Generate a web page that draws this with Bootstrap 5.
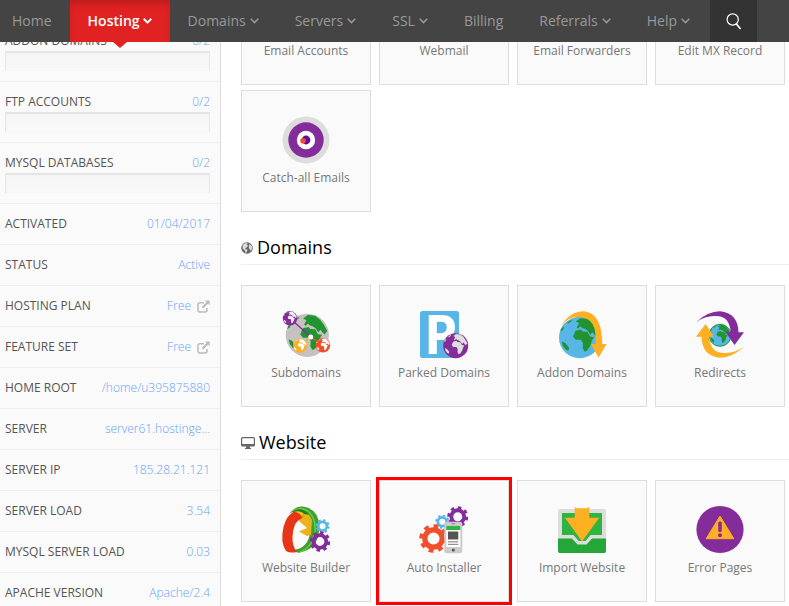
<!DOCTYPE html>
<html lang="en">
<head>
<meta charset="utf-8">
<meta name="viewport" content="width=device-width, initial-scale=1">
<title>Hosting</title>
<link href="https://cdn.jsdelivr.net/npm/bootstrap@5.3.0/dist/css/bootstrap.min.css" rel="stylesheet">
<style>
body{font-family:"Open Sans","Noto Sans",sans-serif;font-size:12px;line-height:20px;color:#555;background:#fff}
a{text-decoration:none}
.topbar{background:#444;height:42px;font-size:14px}
.topbar .nav-link{height:42px;padding:0 18px;color:#999;gap:4px}
.topbar .nav-link.home-link{padding-left:12px}
.topbar .nav-link.active{background:#e02222;color:#fff;font-weight:600;gap:3px;box-shadow:inset 0 6px 8px -4px #b01a1a}
.topbar .nav-link.active::after{content:"";position:absolute;top:100%;left:50%;margin-left:-7px;border:7px solid transparent;border-top:6px solid #e02222;border-bottom:0}
.chev{width:9px;height:6px;fill:none;stroke:currentColor;stroke-width:1.5}
.active .chev{stroke-width:2}
.search-btn{width:47px;height:42px;margin-left:2px;background:#333;color:#fff;border:0}
.scrolled{margin-top:-37px}
.side{width:221px;padding-top:58px;background:#fafafa;border-right:1px solid #ddd}
.side li{padding:10px 10px 10px 5px;border-bottom:1px solid #eee}
.side li a,.side li .val{color:#6ba2f5;font-weight:300}
.side svg{color:#bbb;width:13px;height:13px;margin-left:6px}
.meter{height:20px;background:linear-gradient(#f5f5f5,#f9f9f9);box-shadow:inset 1px 2px 1px #e4e4e4,inset -1px 0 1px #e8e8e8}
.pane{padding-left:20px}
.tiles{display:grid;grid-template-columns:repeat(4,minmax(0,1fr));gap:5px 8px;padding-right:4px}
.tile{height:122px;padding-top:25px;background:#fafafa;border:1px solid #ddd;color:#777;gap:4px}
.tile svg,.tile .blank{width:48px;height:48px;overflow:visible;flex:none}
.picked::after{content:"";position:absolute;inset:-4px;border:3px solid #f00}
.section-title{height:53px;margin:0 0 20px;padding-top:20px;font-size:18px;color:#000;font-weight:400;border-bottom:1px solid #eee;gap:4px}
</style>
<script src="https://cdn.jsdelivr.net/npm/bootstrap@5.3.0/dist/js/bootstrap.bundle.min.js"></script>
</head>
<body>
<svg width="0" height="0" class="d-none" aria-hidden="true">
  <symbol id="land" viewBox="-62 -62 124 124">
    <path d="M-13-20 4-24 9-18 23-17 31-3 43-1 36 10 34 20 23 39 15 43 9 32 10 17 4 7-12 7-20-3zM-9-31-2-43-12-48 2-58 23-56 38-44 48-30 58-12 50-2 44-8 38-16 32-8 24-20 16-26 8-28 2-34-4-27zM-38-44-22-55-26-47-36-42zM-54-28-46-34-50-22-58-18zM-54 12-44 16-32 30-34 40-42 36-50 26z"/>
  </symbol>
  <symbol id="gear" viewBox="-10 -10 20 20">
    <g fill="none" stroke="currentColor"><circle r="6" stroke-width="3.6"/><circle r="8.3" stroke-width="3" pathLength="16" stroke-dasharray="1 1"/></g>
  </symbol>
  <symbol id="chevron" viewBox="0 0 9 6"><path d="M.7.8 4.5 4.6 8.3.8"/></symbol>
  <symbol id="external" viewBox="0 0 13 13">
    <path d="M7 2.8H3Q1 2.8 1 4.8V10Q1 12 3 12H8Q10 12 10 10V8" fill="none" stroke="currentColor" stroke-width="1.5"/>
    <path d="M8 .5H12.7V5.2L11.1 3.6 6.3 8.4 4.8 6.9 9.6 2.1z" fill="currentColor"/>
  </symbol>
</svg>

<nav class="topbar navbar fixed-top p-0 flex-nowrap justify-content-start" aria-label="Main">
  <div class="nav flex-nowrap">
    <a class="nav-link home-link d-flex align-items-center" href="#">Home</a>
    <a class="nav-link active position-relative d-flex align-items-center" href="#">Hosting<svg class="chev"><use href="#chevron"/></svg></a>
    <a class="nav-link d-flex align-items-center" href="#">Domains<svg class="chev"><use href="#chevron"/></svg></a>
    <a class="nav-link d-flex align-items-center" href="#">Servers<svg class="chev"><use href="#chevron"/></svg></a>
    <a class="nav-link d-flex align-items-center" href="#">SSL<svg class="chev"><use href="#chevron"/></svg></a>
    <a class="nav-link d-flex align-items-center" href="#">Billing</a>
    <a class="nav-link d-flex align-items-center" href="#">Referrals<svg class="chev"><use href="#chevron"/></svg></a>
    <a class="nav-link d-flex align-items-center" href="#">Help<svg class="chev"><use href="#chevron"/></svg></a>
  </div>
  <button class="search-btn p-0 d-flex align-items-center justify-content-center" type="button" aria-label="Search">
    <svg width="16" height="17" viewBox="0 0 16 17" fill="none" stroke="currentColor" stroke-width="1.2"><circle cx="6.7" cy="6.5" r="5.6"/><path d="M10.2 10.8 14.6 16" stroke-width="1.7"/></svg>
  </button>
</nav>

<div class="vh-100 overflow-hidden">
<div class="scrolled d-flex">
  <aside class="side flex-shrink-0">
    <ul class="list-unstyled m-0">
      <li><div class="d-flex justify-content-between"><span>ADDON DOMAINS</span><a href="#">0/2</a></div><div class="meter"></div></li>
      <li><div class="d-flex justify-content-between"><span>FTP ACCOUNTS</span><a href="#">0/2</a></div><div class="meter"></div></li>
      <li><div class="d-flex justify-content-between"><span>MYSQL DATABASES</span><a href="#">0/2</a></div><div class="meter"></div></li>
      <li class="d-flex justify-content-between"><span>ACTIVATED</span><span class="val">01/04/2017</span></li>
      <li class="d-flex justify-content-between"><span>STATUS</span><span class="val">Active</span></li>
      <li class="d-flex justify-content-between"><span>HOSTING PLAN</span><a class="d-flex align-items-center" href="#">Free<svg><use href="#external"/></svg></a></li>
      <li class="d-flex justify-content-between"><span>FEATURE SET</span><a class="d-flex align-items-center" href="#">Free<svg><use href="#external"/></svg></a></li>
      <li class="d-flex justify-content-between"><span>HOME ROOT</span><span class="val">/home/u395875880</span></li>
      <li class="d-flex justify-content-between"><span>SERVER</span><span class="val">server61.hostinge...</span></li>
      <li class="d-flex justify-content-between"><span>SERVER IP</span><span class="val">185.28.21.121</span></li>
      <li class="d-flex justify-content-between"><span>SERVER LOAD</span><span class="val">3.54</span></li>
      <li class="d-flex justify-content-between"><span>MYSQL SERVER LOAD</span><span class="val">0.03</span></li>
      <li class="d-flex justify-content-between"><span>APACHE VERSION</span><span class="val">Apache/2.4</span></li>
    </ul>
  </aside>

  <main class="pane flex-grow-1">
    <div class="tiles">
      <a class="tile d-flex flex-column align-items-center" href="#"><span class="blank"></span>Email Accounts</a>
      <a class="tile d-flex flex-column align-items-center" href="#"><span class="blank"></span>Webmail</a>
      <a class="tile d-flex flex-column align-items-center" href="#"><span class="blank"></span>Email Forwarders</a>
      <a class="tile d-flex flex-column align-items-center" href="#"><span class="blank"></span>Edit MX Record</a>
      <a class="tile d-flex flex-column align-items-center" href="#">
        <svg viewBox="0 0 48 48"><circle cx="24" cy="24" r="23.5" fill="#ddd"/><circle cx="24" cy="24" r="17.7" fill="#852c9b"/><circle cx="24" cy="24" r="9.2" fill="#fff"/><circle cx="24" cy="24" r="4.4" fill="#6607a8"/><circle cx="21" cy="24.7" r="2.8" fill="#f0502c"/></svg>
        Catch-all Emails</a>
    </div>

    <h2 class="section-title d-flex align-items-center pb-0">
      <svg width="12" height="12" viewBox="-62 -62 124 124"><circle r="60" fill="#666"/><path d="M-45-28-20-50 8-50-2-32 12-22-4-6-20 0-12 12 6 18-4 44-16 52-22 24-44 8zM26-42 50-20 52 10 38 28 22 4 18-16z" fill="#ddd"/></svg>Domains</h2>
    <div class="tiles">
      <a class="tile d-flex flex-column align-items-center" href="#">
        <svg viewBox="0 0 48 48">
          <circle cx="25.3" cy="24.3" r="21.6" fill="#c6c1c1"/><use href="#land" x="3.7" y="2.7" width="43" height="43" fill="#219430"/>
          <path d="M8 7.3 28.7 26" stroke="#852c9b" stroke-width="1.2"/><path d="M18 34.7 28.7 26" stroke="#fbb022" stroke-width="1.5"/><path d="M41 34.3 28.7 26" stroke="#f0502c" stroke-width="1.5"/>
          <circle cx="28.7" cy="26" r="2.5" fill="#fff"/>
          <circle cx="8" cy="7.3" r="7.2" fill="#852c9b"/><use href="#land" x=".8" y=".1" width="14.4" height="14.4" fill="#eee"/>
          <circle cx="18" cy="34.7" r="7" fill="#fbb022"/><use href="#land" x="11" y="27.7" width="14" height="14" fill="#fff"/>
          <circle cx="41" cy="34.3" r="7.2" fill="#f0502c"/><use href="#land" x="33.8" y="27.1" width="14.4" height="14.4" fill="#fff"/>
        </svg>Subdomains</a>
      <a class="tile d-flex flex-column align-items-center" href="#">
        <svg viewBox="0 0 48 48">
          <rect width="39" height="47" rx="2.5" fill="#58b6e6"/><text x="4" y="42.5" font-size="53" font-weight="700" fill="#fff">P</text>
          <circle cx="35.7" cy="34.7" r="12.5" fill="#852c9b"/><use href="#land" x="23.2" y="22.2" width="25" height="25" fill="#ddd"/>
        </svg>Parked Domains</a>
      <a class="tile d-flex flex-column align-items-center" href="#">
        <svg viewBox="0 0 48 48">
          <circle cx="21.7" cy="26.5" r="20.7" fill="#58b6e6"/><use href="#land" x="1" y="5.8" width="41.4" height="41.4" fill="#219430"/>
          <path d="M3 15Q12 0 26 .2 44 2 44.3 33H48.5L40.7 46.5 32.7 33H37.3Q40 6 20 6 10 6 3 15z" fill="#fdb022"/>
        </svg>Addon Domains</a>
      <a class="tile d-flex flex-column align-items-center" href="#">
        <svg viewBox="0 0 48 48">
          <circle cx="24" cy="24.3" r="11" fill="#58b6e6" stroke="#219430"/><use href="#land" x="13" y="13.3" width="22" height="22" fill="#219430"/>
          <path d="M0 11.2Q12 .2 24 .3 42 2 42.5 21.3H48L38.5 34 29.7 21.3H34.5Q34 4 18 5 9 5 0 11.2z" fill="#852c9b"/>
          <path d="M0 11.2Q12 .2 24 .3 42 2 42.5 21.3H48L38.5 34 29.7 21.3H34.5Q34 4 18 5 9 5 0 11.2z" transform="rotate(180 24 23.5)" fill="#fdb022"/>
        </svg>Redirects</a>
    </div>

    <h2 class="section-title d-flex align-items-center pb-0">
      <svg width="14" height="12" viewBox="0 0 14 12"><rect x=".6" y=".6" width="12.8" height="8.4" rx="1" fill="#fff" stroke="#666" stroke-width="1.2"/><path d="M1 7H13V9H1zM5.5 9H8.5L9 11H10V12H4V11H5z" fill="#666"/></svg>Website</h2>
    <div class="tiles">
      <a class="tile d-flex flex-column align-items-center" href="#">
        <svg viewBox="0 0 48 48">
          <path d="M7 8Q13 0 21 .6 37 3 37.3 21 37 44 16 46.8L10 44Q27 43 28.5 24 28.5 11 20 6 13 3 7 8z" fill="#3fa12a"/>
          <path d="M9 6Q20-1 28 7 34 14 33 26 31 41 17 46.5" fill="none" stroke="#66cf4f" stroke-width="1.3"/>
          <path d="M11 7Q19 2 25 9" fill="none" stroke="#1c7e20" stroke-width="3"/>
          <path d="M20 7.5 27 9 30 14 29 29 25 30 17 25.5 25 22 17 15z" fill="#eab31b"/>
          <path d="M4 45Q-2 36 1.5 21 5 8 13 5.5 19 4.5 22 8 21 12 17 14 11 18 10.5 31 10 40 15 46 8 47.5 4 45z" fill="#e63517"/>
          <path d="M12 5.800Q19 4 22 8L20 11Q17 6 12 5.800z" fill="#f2c21c"/>
          <use href="#gear" x="33.3" y="13" width="14.5" height="14.5" color="#58b6e6"/><use href="#gear" x="27.500" y="25" width="21" height="21" color="#852c9b"/>
        </svg>Website Builder</a>
      <a class="tile picked position-relative d-flex flex-column align-items-center" href="#">
        <svg viewBox="0 0 48 48">
          <use href="#gear" x="27" y="0" width="21.500" height="21.500" color="#852c9b"/>
          <use href="#gear" x="15" y="8.500" width="14.500" height="14.500" color="#58b6e6"/>
          <use href="#gear" x="-1" y="18" width="29" height="29" color="#f0502c"/>
          <rect x="24.300" y="15.700" width="18" height="31.500" rx="2.500" fill="#ccc"/><rect x="26.300" y="20" width="14" height="21" fill="#fff"/><path d="M26.300 20H40.300V24H26.300z" fill="#2fb441"/>
          <path d="M28 25.500H38.300V33.500H28z" fill="#555"/><path d="M28 35.800H38.300M28 38.300H38.300" stroke="#777"/><circle cx="33.300" cy="44" r="1.500" fill="#555"/><path d="M31.500 17.800H35" stroke="#888"/>
        </svg>Auto Installer</a>
      <a class="tile d-flex flex-column align-items-center" href="#">
        <svg viewBox="0 0 48 48">
          <rect y="3" width="48" height="44" rx="2" fill="#ddd"/><path d="M4 7H44V30H33L28 36H20L15 30H4z" fill="#2fb441"/>
          <path d="M4 30H15L20 36H28L33 30H44" fill="none" stroke="#ddd" stroke-width="2"/>
          <path d="M0 32.500H14L19.500 38.500H28.500L34 32.500H48V45Q48 47 46 47H2Q0 47 0 45z" fill="#24a638"/>
          <path d="M16.700 1 19 2.200H29L31.300 1V11.800H41.300L24 35.500 7 11.800H16.700z" fill="#fdb022"/>
        </svg>Import Website</a>
      <a class="tile d-flex flex-column align-items-center" href="#">
        <svg viewBox="0 0 48 48">
          <circle cx="24" cy="23.500" r="23.600" fill="#852c9b"/><path d="M24 10 37.800 32.700H10.200z" fill="#fdb022" stroke="#fdb022" stroke-linejoin="round"/>
          <rect x="22.200" y="15.500" width="3.600" height="10.500" rx="1.500" fill="#852c9b"/><circle cx="24" cy="29.300" r="2" fill="#852c9b"/>
        </svg>Error Pages</a>
    </div>
  </main>
</div>
</div>
</body>
</html>
